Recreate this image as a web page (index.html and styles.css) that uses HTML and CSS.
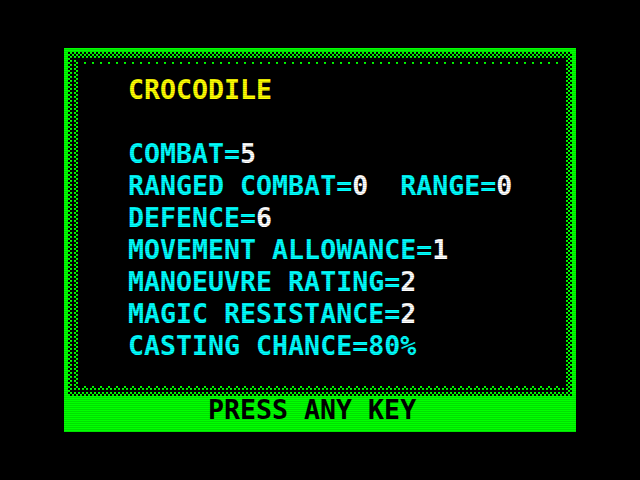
FILE: index.html
```html
<html>
  <head>
    <meta charset="utf-8">
    <meta name="viewport" content="width=device-width, initial-scale=1.0">
    <title>chaos - crocodile</title>
    <link rel="stylesheet" href="styles.css">
  </head>
  <body>
    <div class="screen">
      <div class="ring dense">
        <div class="ring medium">
          <div class="ring sparse">
            <div class="sheet">
              <div class="line title">CROCODILE</div>
              <div class="line"></div>
              <div class="line">COMBAT=<span class="val">5</span></div>
              <div class="line">RANGED COMBAT=<span class="val">0</span>  RANGE=<span class="val">0</span></div>
              <div class="line">DEFENCE=<span class="val">6</span></div>
              <div class="line">MOVEMENT ALLOWANCE=<span class="val">1</span></div>
              <div class="line">MANOEUVRE RATING=<span class="val">2</span></div>
              <div class="line">MAGIC RESISTANCE=<span class="val">2</span></div>
              <div class="line">CASTING CHANCE=80%</div>
            </div>
          </div>
        </div>
      </div>
      <div class="prompt">PRESS ANY KEY</div>
    </div>
  </body>
</html>
```

FILE: styles.css
```css
body {
  margin: 0;
  background-color: #000;
  font-family: "DejaVu Sans Mono", monospace;
  font-weight: bold;
  font-size: 26.6px;
}

/* crt scanlines over the whole picture */
body::after {
  content: "";
  position: fixed;
  inset: 0;
  pointer-events: none;
  background: repeating-linear-gradient(to bottom, transparent 0 1px, rgba(0, 0, 0, 0.12) 1px 2px);
}

.screen {
  margin: 48px 64px;
  width: 512px;
  height: 384px;
  box-sizing: border-box;
  padding: 4px 4px 0 4px;
  background-color: #00ff00;
  display: flex;
  flex-direction: column;
}

.ring {
  display: flex;
  flex: 1;
  padding: 4px;
}

.ring > * {
  flex: 1;
}

/* the frame fades from solid green into the black sheet */
.dense {
  height: 344px;
  box-sizing: border-box;
  flex: none;
  background: repeating-conic-gradient(#00ff00 0 25%, #000 0 50%) 0 0 / 4px 4px;
}

.medium {
  background: conic-gradient(at 2px 2px, #000 75%, #00ff00 0) 2px 0 / 4px 4px;
}

.sparse {
  background: conic-gradient(at 2px 2px, #000 75%, #00ff00 0) 0 2px / 8px 4px;
}

.sheet {
  background-color: #000;
  padding: 10px 0 0 48px;
  color: #00ffff;
}

.line {
  height: 32px;
  line-height: 32px;
  white-space: pre;
}

.title {
  color: #ffff00;
}

.val {
  color: #ffffff;
}

.prompt {
  height: 36px;
  line-height: 28px;
  padding-left: 140px;
  color: #000;
  white-space: pre;
}
```
